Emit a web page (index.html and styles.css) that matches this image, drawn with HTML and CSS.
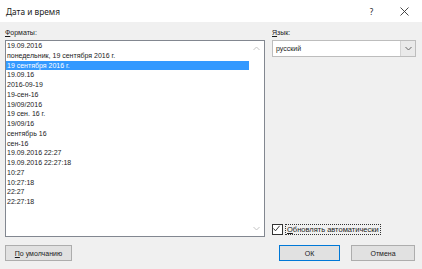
FILE: index.html
```html
<!DOCTYPE html>
<html lang="ru">

<head>
    <meta charset="UTF-8">
    <title>Дата и время</title>
    <link rel="stylesheet" href="styles.css">
</head>

<body>
    <div class="dialog">
        <!-- Title bar -->
        <div class="titlebar">
            <span class="title">Дата и время</span>
            <span class="help">?</span>
            <span class="close">
                <svg width="9" height="9" viewBox="0 0 9 9"><path d="M0.5 0.5L8.5 8.5M8.5 0.5L0.5 8.5" stroke="#333" stroke-width="0.9" fill="none"/></svg>
            </span>
        </div>

        <div class="content">
            <div class="left-col">
                <div class="label"><u>Ф</u>орматы:</div>
                <div class="listbox">
                    <ul class="items" id="formats"></ul>
                    <div class="scrollbar">
                        <svg width="7" height="5" viewBox="0 0 7 5"><path d="M0.5 4L3.5 1L6.5 4" stroke="#c4c4c4" fill="none"/></svg>
                        <svg width="7" height="5" viewBox="0 0 7 5"><path d="M0.5 1L3.5 4L6.5 1" stroke="#c4c4c4" fill="none"/></svg>
                    </div>
                </div>
            </div>

            <div class="right-col">
                <div class="label"><u>Я</u>зык:</div>
                <div class="combo">
                    <span class="combo-text">русский</span>
                    <span class="combo-btn">
                        <svg width="7" height="5" viewBox="0 0 7 5"><path d="M0.5 1L3.5 4L6.5 1" stroke="#666" fill="none"/></svg>
                    </span>
                </div>
                <label class="check-row">
                    <span class="checkbox">
                        <svg width="9" height="9" viewBox="0 0 9 9"><path d="M1.5 4.5L3.5 6.8L7.6 1.8" stroke="#222" stroke-width="0.9" fill="none"/></svg>
                    </span>
                    <span class="check-label"><u>О</u>бновлять автоматически</span>
                </label>
            </div>
        </div>

        <div class="footer">
            <button class="btn default-btn"><u>П</u>о умолчанию</button>
            <div class="spacer"></div>
            <button class="btn ok-btn">ОК</button>
            <button class="btn">Отмена</button>
        </div>
    </div>

    <script>
        const formats = [
            "19.09.2016",
            "понедельник, 19 сентября 2016 г.",
            "19 сентября 2016 г.",
            "19.09.16",
            "2016-09-19",
            "19-сен-16",
            "19/09/2016",
            "19 сен. 16 г.",
            "19/09/16",
            "сентябрь 16",
            "сен-16",
            "19.09.2016 22:27",
            "19.09.2016 22:27:18",
            "10:27",
            "10:27:18",
            "22:27",
            "22:27:18"
        ];

        let list = document.getElementById('formats');
        formats.forEach((text, i) => {
            let li = document.createElement('li');
            li.textContent = text;
            if (i === 2) li.classList.add('selected');
            list.appendChild(li);
        });
    </script>
</body>

</html>
```
FILE: styles.css
```css
body {
    margin: 0;
    font-family: "Liberation Sans", Arial, sans-serif;
    color: #1a1a1a;
}

.dialog {
    width: 422px;
    height: 269px;
    background-color: #f0f0f0;
    display: flex;
    flex-direction: column;
}

.titlebar {
    height: 22px;
    background-color: #fff;
    display: flex;
    align-items: center;
    padding-left: 6px;
    flex-shrink: 0;
}

.title {
    font-family: "Noto Sans", sans-serif;
    font-size: 8.3px;
    flex: 1;
}

.help {
    font-family: "Noto Sans", sans-serif;
    font-size: 8px;
    width: 31px;
    text-align: center;
}

.close {
    width: 35px;
    display: flex;
    justify-content: center;
    align-items: center;
}

.content {
    display: flex;
    gap: 7px;
    padding: 6px 6px 0 5px;
}

.label {
    font-size: 7px;
    height: 12px;
    line-height: 10px;
}

.left-col {
    width: 260px;
    display: flex;
    flex-direction: column;
}

.listbox {
    height: 197px;
    border: 1px solid #828790;
    background-color: #fff;
    display: flex;
    box-sizing: border-box;
}

.items {
    list-style: none;
    margin: 0;
    padding: 0;
    flex: 1;
    font-size: 7px;
}

.items li {
    height: 9.75px;
    line-height: 9.75px;
    padding-left: 1px;
    white-space: nowrap;
}

.items li.selected {
    background-color: #3399ff;
    color: #fff;
}

.scrollbar {
    width: 15px;
    display: flex;
    flex-direction: column;
    justify-content: space-between;
    align-items: center;
    padding: 5px 0 5px;
    background-color: #fff;
}

.right-col {
    flex: 1;
    display: flex;
    flex-direction: column;
}

.combo {
    height: 17px;
    border: 1px solid #bdbdbd;
    background-color: #fff;
    display: flex;
    box-sizing: border-box;
}

.combo-text {
    flex: 1;
    font-size: 7px;
    line-height: 15px;
    padding-left: 3px;
}

.combo-btn {
    width: 14px;
    border-left: 1px solid #d4d4d4;
    background-color: #eaeaea;
    display: flex;
    align-items: center;
    justify-content: center;
}

.check-row {
    margin-top: auto;
    margin-bottom: 2px;
    display: flex;
    align-items: center;
    gap: 2px;
    font-size: 7.5px;
}

.checkbox {
    width: 9px;
    height: 9px;
    border: 1px solid #333;
    background-color: #fff;
    display: flex;
}

.checkbox svg {
    margin: -1px;
}

.check-label {
    border: 1px dotted #333;
    padding: 0 1px;
    line-height: 9px;
}

.footer {
    display: flex;
    gap: 11px;
    padding: 8px 7px 0 5px;
}

.spacer {
    flex: 1;
}

.btn {
    font-family: "Liberation Sans", Arial, sans-serif;
    font-size: 7px;
    height: 16px;
    width: 64px;
    padding: 0;
    background-color: #e1e1e1;
    border: 1px solid #adadad;
    color: #1a1a1a;
}

.default-btn {
    width: 67px;
}

.ok-btn {
    width: 61px;
    border-color: #0078d7;
}
```
